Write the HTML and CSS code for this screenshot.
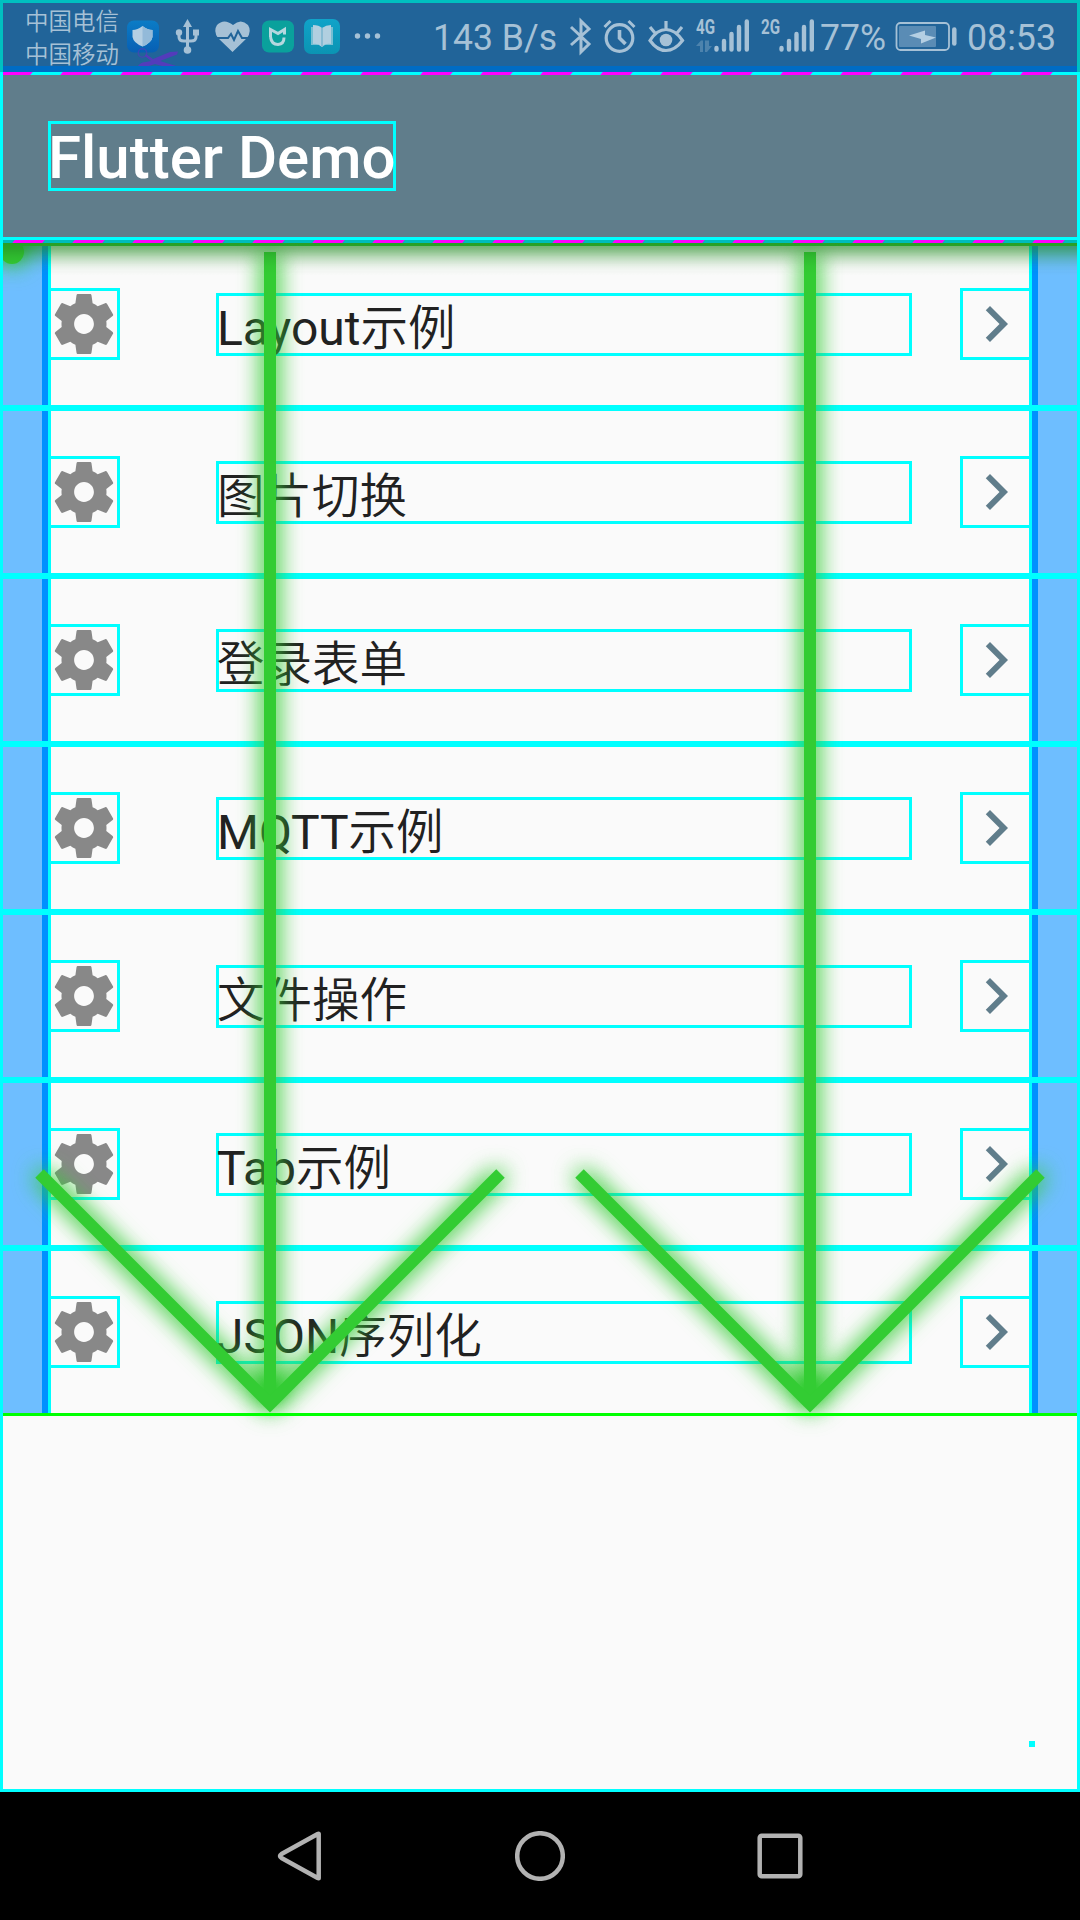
FILE: index.html
```html
<!DOCTYPE html>
<html lang="zh-CN">
<head>
<meta charset="utf-8">
<title>Flutter Demo</title>
<link rel="stylesheet" href="styles.css">
</head>
<body>
<svg class="defs" width="0" height="0">
  <defs>
    <symbol id="gear" viewBox="0 0 24 24"><path d="M19.43 12.98c.04-.32.07-.64.07-.98s-.03-.66-.07-.98l2.11-1.65c.19-.15.24-.42.12-.64l-2-3.46c-.12-.22-.39-.3-.61-.22l-2.49 1c-.52-.4-1.08-.73-1.69-.98l-.38-2.65C14.46 2.18 14.25 2 14 2h-4c-.25 0-.46.18-.49.42l-.38 2.65c-.61.25-1.17.59-1.69.98l-2.49-1c-.23-.09-.49 0-.61.22l-2 3.46c-.13.22-.07.49.12.64l2.11 1.65c-.04.32-.07.65-.07.98s.03.66.07.98l-2.11 1.65c-.19.15-.24.42-.12.64l2 3.46c.12.22.39.3.61.22l2.49-1c.52.4 1.08.73 1.69.98l.38 2.65c.03.24.24.42.49.42h4c.25 0 .46-.18.49-.42l.38-2.65c.61-.25 1.17-.59 1.69-.98l2.49 1c.23.09.49 0 .61-.22l2-3.46c.12-.22.07-.49-.12-.64l-2.11-1.65zM12 15.3c-1.820 0-3.300-1.480-3.300-3.300s1.480-3.300 3.300-3.300 3.300 1.480 3.300 3.300-1.480 3.300-3.300 3.300z"/></symbol>
    <symbol id="chevron" viewBox="0 0 24 24"><path d="M10 6L8.59 7.41 13.17 12l-4.58 4.59L10 18l6-6z"/></symbol>
  </defs>
</svg>
<div class="screen">
  <header class="status">
    <div class="carriers"><span>中国电信</span><span>中国移动</span></div>
    <svg class="status-icons" width="1080" height="66" viewBox="0 0 1080 66">
      <defs>
        <linearGradient id="shield" x1="0" x2="0" y1="0" y2="1"><stop offset="0" stop-color="#0b7cc6"/><stop offset="1" stop-color="#075fb4"/></linearGradient>
        <linearGradient id="book" x1="0" x2="0" y1="0" y2="1"><stop offset="0" stop-color="#10a3c9"/><stop offset="1" stop-color="#0b94b3"/></linearGradient>
      </defs>
      <rect x="127" y="20.500" width="32" height="32" rx="7" fill="url(#shield)"/>
      <path d="M142.500 26q5 4 10 4v7q-1 6-10 9.500q-9-3.500-10-9.500v-7q5 0 10-4z" fill="#b4cfe3"/>
      <path d="M142.500 26q5 4 10 4v7q-1 6-10 9.500z" fill="#93bad9"/>
      <circle cx="142.500" cy="53" r="4.200" fill="none" stroke="#533cbb" stroke-width="1.500" opacity=".6"/>
      <path d="M146 54l7 5 17-7 8-0.500-1 3-17 6.500 16 5h-14l-7-2-6 2h-11q3-4 8-4l5-1-6-5z" fill="#533cbb"/>
      <path d="M187.500 25V50M179 34v3q0 4 5 4h7q5 0 5-4v-3" fill="none" stroke="#a6c1d6" stroke-width="3"/>
      <g fill="#a6c1d6"><path d="M187.500 19l4.500 8h-9z"/><circle cx="187.500" cy="50" r="3.800"/><circle cx="179" cy="32.500" r="3.200"/><rect x="193" y="29.500" width="6" height="6"/></g>
      <path d="M232.500 52L218 38q-5-7-1-13q7-7 16 0q8-7 15 0q4 6-1 13z" fill="#a6c1d6"/>
      <path d="M215 38h13l3-4 3 6 4-9 4 7h8" fill="none" stroke="#216499" stroke-width="2"/>
      <rect x="262" y="20.500" width="32" height="32" rx="7" fill="#0aa19c"/>
      <path d="M270.500 37v-7.500l7.500 4 6.500-4v5M270.500 37q1 7.500 7.500 7.500q6-.5 6-7" fill="none" stroke="#b5d8df" stroke-width="3"/>
      <rect x="304" y="19" width="36" height="35" rx="7" fill="url(#book)"/>
      <path d="M311 27h5l6 1 6-1h5v18h-8l-3 2-3-2h-8z" fill="#75bfd3"/>
      <path d="M313 25q6 0 9 3q4-3 9-3v19q-6-1-9 3q-4-4-9-3z" fill="#b1cfe0"/><path d="M322 28v19" stroke="#7ab5cf" stroke-width="1.500"/>
      <g fill="#a6c1d6"><circle cx="357.500" cy="36" r="2.700"/><circle cx="367.500" cy="36" r="2.700"/><circle cx="377.500" cy="36" r="2.700"/></g>

      <path d="M571 27l18 17-8 8V21l8 8-18 16" fill="none" stroke="#a6c1d6" stroke-width="3"/>
      <g fill="none" stroke="#a6c1d6" stroke-width="3.200">
        <circle cx="619.500" cy="38" r="13.300"/>
        <path d="M604.500 27l6-6M628.500 21l6 6" stroke-width="3"/>
        <path d="M619.500 30v8l6 6" stroke-width="3.600"/>
      </g>
      <path d="M650 40.500q7-11 16-11t16.500 11q-7.500 10-16.500 10t-16-10zM666 21v8M650 27l5 6M682 27l-5 6" fill="none" stroke="#a6c1d6" stroke-width="3.200"/>
      <circle cx="666" cy="40" r="6.300" fill="#a6c1d6"/>
      <path d="M696 46l5-5.500h2v11.500h-3v-6zM705 40.500v11.500h2l5-6h-3v-5.500z" fill="#4d83ad"/>
      <g stroke="#a6c1d6" stroke-width="4.400" stroke-linecap="round">
        <path d="M716.500 48v1.500M724 41v8.500M731.500 34v15.500M739 27v22.500M746.800 21.500v28"/>
        <path d="M781.500 48v1.500M789 41v8.500M796.500 34v15.500M804 27v22.500M811.800 21.500v28"/>
      </g>
      <rect x="896.500" y="23" width="52.500" height="27" rx="4" fill="none" stroke="#a6c1d6" stroke-width="1.800"/>
      <rect x="899" y="26" width="37" height="21" rx="1" fill="#5a8cb5"/>
      <path d="M925 30.500v4.500l11 2.500-15 6v-4.500l-12-3.500z" fill="#b4cfe3"/>
      <path d="M954.300 29.500v14" stroke="#a6c1d6" stroke-width="4.500" stroke-linecap="round"/>
      <g fill="#a6c1d6" class="status-text">
        <text x="433" y="50" textLength="124" lengthAdjust="spacingAndGlyphs">143 B/s</text>
        <text x="820" y="50" textLength="66" lengthAdjust="spacingAndGlyphs">77%</text>
        <text x="967" y="50" textLength="89" lengthAdjust="spacingAndGlyphs">08:53</text>
        <text class="net" x="696" y="34" textLength="19" lengthAdjust="spacingAndGlyphs">4G</text>
        <text class="net" x="761" y="34" textLength="19" lengthAdjust="spacingAndGlyphs">2G</text>
      </g>
    </svg>
  </header>

  <div class="appbar"><h1>Flutter Demo</h1></div>

  <main class="content">
    <ul class="list">
      <li class="row"><span class="lead"><svg><use href="#gear"/></svg></span><span class="name">Layout<span class="han">示例</span></span><span class="trail"><svg><use href="#chevron"/></svg></span></li>
      <li class="row"><span class="lead"><svg><use href="#gear"/></svg></span><span class="name"><span class="han">图片切换</span></span><span class="trail"><svg><use href="#chevron"/></svg></span></li>
      <li class="row"><span class="lead"><svg><use href="#gear"/></svg></span><span class="name"><span class="han">登录表单</span></span><span class="trail"><svg><use href="#chevron"/></svg></span></li>
      <li class="row"><span class="lead"><svg><use href="#gear"/></svg></span><span class="name">MQTT<span class="han">示例</span></span><span class="trail"><svg><use href="#chevron"/></svg></span></li>
      <li class="row"><span class="lead"><svg><use href="#gear"/></svg></span><span class="name"><span class="han">文件操作</span></span><span class="trail"><svg><use href="#chevron"/></svg></span></li>
      <li class="row"><span class="lead"><svg><use href="#gear"/></svg></span><span class="name">Tab<span class="han">示例</span></span><span class="trail"><svg><use href="#chevron"/></svg></span></li>
      <li class="row"><span class="lead"><svg><use href="#gear"/></svg></span><span class="name">JSON<span class="han">序列化</span></span><span class="trail"><svg><use href="#chevron"/></svg></span></li>
    </ul>
    <span class="dot"></span>
  </main>

  <nav class="navbar">
    <svg width="50" height="50" viewBox="0 0 50 50"><path d="M43.700 3v44q0 .5-1 0L6.500 27q-3-2 0-4L42.700 3q1-.5 1 0z"/></svg>
    <svg width="50" height="50" viewBox="0 0 50 50"><circle cx="25" cy="25" r="22.800"/></svg>
    <svg width="50" height="50" viewBox="0 0 50 50"><rect x="4.700" y="4.700" width="40.600" height="40.600" rx="2"/></svg>
  </nav>

  <svg class="overlay" width="1080" height="1920" viewBox="0 0 1080 1920">
    <defs>
      <filter id="glow" filterUnits="userSpaceOnUse" x="-60" y="180" width="1200" height="1320" color-interpolation-filters="sRGB"><feGaussianBlur stdDeviation="12"/><feComponentTransfer><feFuncA type="linear" slope="1.550"/></feComponentTransfer></filter>
      <clipPath id="body"><rect x="0" y="243" width="1080" height="1546"/></clipPath>
      <linearGradient id="shade" x1="0" x2="0" y1="0" y2="1">
        <stop offset="0" stop-color="#000" stop-opacity=".22"/>
        <stop offset=".17" stop-color="#000" stop-opacity=".19"/>
        <stop offset=".4" stop-color="#000" stop-opacity=".1"/>
        <stop offset=".7" stop-color="#000" stop-opacity=".025"/>
        <stop offset="1" stop-color="#000" stop-opacity="0"/>
      </linearGradient>
      <g id="arrow" fill="none" stroke="#3c3" stroke-width="12"><path d="M270 252V1404"/><path d="M39.500 1173.500L270 1404L500.500 1173.500"/></g>
    </defs>
    <g clip-path="url(#body)">
      <g filter="url(#glow)"><path d="M-30 240H1110" stroke="#3c3" stroke-width="12"/><circle cx="12" cy="252" r="12" fill="#3c3"/></g>
      <path d="M0 240H1080" stroke="#3c3" stroke-width="12"/><circle cx="12" cy="252" r="12" fill="#3c3"/>
      <use href="#arrow" filter="url(#glow)"/><use href="#arrow"/>
      <g transform="translate(540 0)"><use href="#arrow" filter="url(#glow)"/><use href="#arrow"/></g>
    </g>
    <rect x="3" y="1413" width="1074" height="3" fill="#0f0"/>
    <rect y="243" width="1080" height="33" fill="url(#shade)"/>
    <g fill="none" stroke-width="3">
      <path d="M3 73.500H1077" stroke="#0ff"/>
      <path d="M3 241.500H1077" stroke="#00bcbc"/>
      <path transform="translate(1.500 73.500) skewX(-40)" d="M0 0H1075" stroke="#f0f" stroke-dasharray="30 30"/>
      <path transform="translate(13.500 241.500) skewX(-40)" d="M0 0H1062" stroke="#f0f" stroke-dasharray="30 30"/>
      <rect x="1.500" y="1.500" width="1077" height="1789" stroke="#0ff"/>
      <path d="M0 1.500H1080M1.500 3V72M1078.500 3V72" stroke="#00c0c0"/>
    </g>
  </svg>
</div>
</body>
</html>
```
FILE: styles.css
```css
* { box-sizing: border-box; }
body { margin: 0; }
.defs { display: block; height: 0; }
.screen {
  position: relative;
  display: flex;
  flex-direction: column;
  width: 1080px;
  height: 1920px;
  overflow: hidden;
  background: #fafafa;
  font-family: Roboto, "Noto Sans CJK SC", sans-serif;
}
.status {
  position: relative;
  height: 72px;
  background: #216499;
  border-bottom: 6px solid #006cc4;
  color: #a6c1d6;
}
.carriers {
  display: flex;
  flex-direction: column;
  padding: 4px 0 0 25px;
  font-family: "Noto Sans CJK SC DemiLight", "Noto Sans CJK SC", sans-serif;
  font-size: 23.500px;
  font-weight: 350;
  line-height: 32.500px;
}
.status-icons { position: absolute; left: 0; top: 0; }
.status-text { font-size: 36.500px; }
.status-text .net { font-size: 20px; font-weight: 700; }
.appbar {
  display: flex;
  align-items: center;
  height: 168px;
  padding: 3px 48px 0;
  background: #607d8b;
  border-bottom: 3px solid #0ff;
}
.appbar h1 {
  margin: 0;
  width: 348px;
  height: 70px;
  border: 3px solid #0ff;
  color: #fff;
  font-size: 60px;
  font-weight: 500;
  line-height: 68px;
  white-space: nowrap;
  text-indent: -3px;
}
.content { position: relative; flex: 1; }
.list { margin: 0; padding: 0; list-style: none; }
.row {
  display: grid;
  grid-template-columns: 72px 96px 696px 48px 72px;
  align-items: center;
  height: 168px;
  padding: 0 48px;
  background: linear-gradient(90deg, #6ebeff 42px, #0090ff 42px 48px, #0ff 48px 51px, #fafafa 51px 1029px, #0ff 1029px 1032px, #0090ff 1032px 1038px, #6ebeff 1038px);
  box-shadow: inset 0 3px #0ff, inset 0 -3px #0ff;
}
.lead, .name, .trail { border: 3px solid #0ff; }
.lead, .trail { width: 72px; height: 72px; }
.lead { grid-column: 1; fill: #888; }
.trail { grid-column: 5; fill: #607d8b; }
.lead svg, .trail svg { display: block; width: 72px; height: 72px; margin: -3px; }
.name {
  grid-column: 3;
  height: 63px;
  color: #212121;
  font-size: 48px;
  line-height: 65px;
  text-indent: -2px;
  white-space: nowrap;
}
.han {
  font-family: "Noto Sans CJK SC DemiLight", "Noto Sans CJK SC", sans-serif;
  font-size: 47.500px;
  font-weight: 350;
  line-height: 1;
}
.dot { position: absolute; left: 1029px; top: 1501px; width: 6px; height: 6px; background: #0ff; }
.navbar {
  display: flex;
  justify-content: center;
  align-items: center;
  gap: 190px;
  height: 128px;
  background: #000;
}
.navbar svg { fill: none; stroke: #b2b2b2; stroke-width: 4.500; stroke-linejoin: round; }
.overlay { position: absolute; left: 0; top: 0; pointer-events: none; }
```
